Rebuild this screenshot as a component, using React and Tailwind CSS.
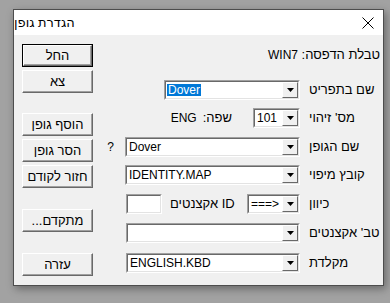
import React from "react";

const FONT = { fontFamily: '"Liberation Sans", "DejaVu Sans", sans-serif' };

function Btn({ children, def, className = "" }) {
  return (
    <div
      className={`w-[71px] h-[23px] bg-[#f0f0f0] flex items-center justify-center text-[13px] text-black ${
        def ? "border border-black" : ""
      } ${className}`}
    >
      <div className="w-full h-full border border-t-white border-l-white border-b-[#696969] border-r-[#696969] flex items-center justify-center shadow-[inset_-1px_-1px_0_#a0a0a0]">
        <span dir="rtl">{children}</span>
      </div>
    </div>
  );
}

function Combo({ w, value, selected }) {
  return (
    <div
      className="h-[20px] bg-white border border-t-[#a0a0a0] border-l-[#a0a0a0] border-b-white border-r-white shrink-0"
      style={{ width: w }}
    >
      <div className="h-full flex items-center border border-t-[#696969] border-l-[#696969] border-b-[#e3e3e3] border-r-[#e3e3e3]">
        <div className="flex-1 flex items-center pl-[1px] text-[12px] text-black overflow-hidden whitespace-nowrap">
          {selected ? (
            <span className="bg-[#0078d7] text-white px-[1px] leading-[12px] h-[12px]">{value}</span>
          ) : (
            <span className="px-[1px]">{value}</span>
          )}
        </div>
        <div className="w-[16px] h-full bg-[#f0f0f0] border border-t-white border-l-white border-b-[#696969] border-r-[#696969] flex items-center justify-center shrink-0">
          <svg width="7" height="4" viewBox="0 0 7 4">
            <path d="M0 0h7L3.5 4z" fill="#000" />
          </svg>
        </div>
      </div>
    </div>
  );
}

function Row({ label, children, className = "", start }) {
  return (
    <div className={`flex items-center h-[20px] ${className}`}>
      <div className={`w-[200px] flex items-center ${start ? "justify-start" : "justify-end"}`}>{children}</div>
      <div className="ml-[9px] text-[13px] text-black whitespace-nowrap" dir="rtl">
        {label}
      </div>
    </div>
  );
}

export default function App() {
  return (
    <div className="w-[390px] h-[303px] bg-[#a2a2a2] overflow-hidden" style={FONT}>
      <div className="ml-[13px] mt-[9px] w-[371px] h-[277px] border border-[#4d4d4d] shadow-[2px_3px_8px_rgba(0,0,0,0.35)] flex flex-col">
        {/* title bar */}
        <div className="h-[25px] bg-white flex items-center justify-between pl-[0px] pr-[9px]">
          <span dir="rtl" className="text-[13px] text-black" style={{ fontFamily: '"Noto Sans", "DejaVu Sans", sans-serif' }}>
            הגדרת גופן
          </span>
          <svg width="12" height="12" viewBox="0 0 12 12">
            <path d="M0.5 0.5L11.5 11.5M11.5 0.5L0.5 11.5" stroke="#000" strokeWidth="1" />
          </svg>
        </div>

        {/* body */}
        <div className="flex-1 bg-[#f0f0f0] flex">
          {/* buttons */}
          <div className="pl-[8px] pt-[9px] flex flex-col">
            <Btn def>החל</Btn>
            <Btn className="mt-[3px]">צא</Btn>
            <Btn className="mt-[20px]">הוסף גופן</Btn>
            <Btn className="mt-[3px]">הסר גופן</Btn>
            <Btn className="mt-[3px]">חזור לקודם</Btn>
            <Btn className="mt-[21px]">מתקדם...</Btn>
            <Btn className="mt-[21px]">עזרה</Btn>
          </div>

          {/* form */}
          <div className="ml-[7px] flex flex-col">
            <div className="mt-[13px] h-[14px] flex items-center">
              <span className="ml-[168px] text-[13px] text-black whitespace-nowrap" dir="rtl">
                טבלת הדפסה: <span className="text-[12px]">WIN7</span>
              </span>
            </div>
            <Row label="שם בתפריט" className="mt-[18px]">
              <Combo w={136} value="Dover" selected />
            </Row>
            <Row label="מס' זיהוי" className="mt-[8px]">
              <span className="text-[12px] text-black mr-[6px]">ENG</span>
              <span className="text-[13px] text-black mr-[21px]" dir="rtl">שפה:</span>
              <Combo w={47} value="101" />
            </Row>
            <Row label="שם הגופן" className="mt-[9px]">
              <span className="text-[12px] text-black mr-[11px]">?</span>
              <Combo w={175} value="Dover" />
            </Row>
            <Row label="קובץ מיפוי" className="mt-[8px]">
              <Combo w={175} value="IDENTITY.MAP" />
            </Row>
            <Row label="כיוון" className="mt-[9px]" start>
              <div className="ml-[26px] w-[36px] h-[20px] bg-white border border-t-[#a0a0a0] border-l-[#a0a0a0] border-b-white border-r-white shrink-0">
                <div className="h-full border border-t-[#696969] border-l-[#696969] border-b-[#e3e3e3] border-r-[#e3e3e3]" />
              </div>
              <span className="ml-[8px] w-[77px] text-left text-[13px] text-black whitespace-nowrap shrink-0" dir="rtl">
                ID אקצנטים
              </span>
              <Combo w={53} value="===>" />
            </Row>
            <Row label="טב' אקצנטים" className="mt-[9px]">
              <Combo w={174} value="" />
            </Row>
            <Row label="מקלדת" className="mt-[10px]">
              <Combo w={174} value="ENGLISH.KBD" />
            </Row>
          </div>
        </div>
      </div>
    </div>
  );
}
